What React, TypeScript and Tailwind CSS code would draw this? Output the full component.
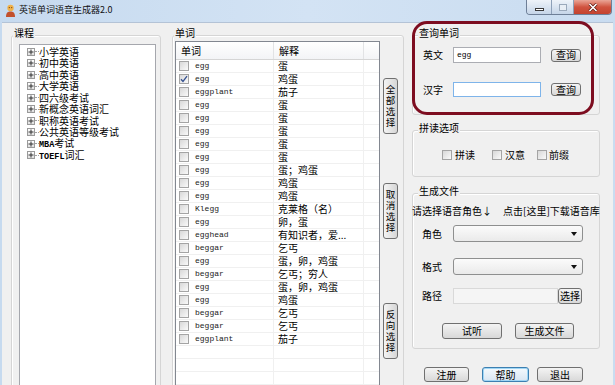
import React from 'react';

const FONT = "font-['Noto_Sans_CJK_SC','Noto_Sans',sans-serif]";
const MONO = "font-['Liberation_Mono','DejaVu_Sans_Mono',monospace]";

const courses = [
  '小学英语',
  '初中英语',
  '高中英语',
  '大学英语',
  '四六级考试',
  '新概念英语词汇',
  '职称英语考试',
  '公共英语等级考试',
  'MBA|考试',
  'TOEFL|词汇',
];

const words: [string, string][] = [
  ['egg', '蛋'],
  ['egg', '鸡蛋'],
  ['eggplant', '茄子'],
  ['egg', '蛋'],
  ['egg', '蛋'],
  ['egg', '蛋'],
  ['egg', '蛋'],
  ['egg', '蛋'],
  ['egg', '蛋；鸡蛋'],
  ['egg', '鸡蛋'],
  ['egg', '鸡蛋'],
  ['Klegg', '克莱格（名）'],
  ['egg', '卵，蛋'],
  ['egghead', '有知识者，爱...'],
  ['beggar', '乞丐'],
  ['egg', '蛋，卵，鸡蛋'],
  ['beggar', '乞丐；穷人'],
  ['egg', '蛋，卵，鸡蛋'],
  ['egg', '鸡蛋'],
  ['beggar', '乞丐'],
  ['beggar', '乞丐'],
  ['eggplant', '茄子'],
];

function Check({ checked = false }: { checked?: boolean }) {
  return (
    <span className="flex h-[10px] w-[10px] shrink-0 items-center justify-center border border-[#a4a4a4] bg-linear-to-br from-[#d8d8d8] to-[#fafafa]">
      {checked && (
        <svg width="8" height="8" viewBox="0 0 8 8">
          <path d="M1 4.2 L3 6.4 L7 1.2" fill="none" stroke="#34508f" strokeWidth="1.3" />
        </svg>
      )}
    </span>
  );
}

function Group({
  label,
  labelPos,
  className,
  children,
}: {
  label: string;
  labelPos: string;
  className: string;
  children?: React.ReactNode;
}) {
  return (
    <div className={`relative shrink-0 rounded-[3px] border border-[#d5d5d5] shadow-[inset_1px_1px_0_#fff] ${className}`}>
      <span className={`absolute -top-[9px] ${labelPos} bg-[#f0f0f0] px-[1px] text-[10px] leading-[12px]`}>{label}</span>
      {children}
    </div>
  );
}

function Btn({ children, className, primary = false }: { children: React.ReactNode; className: string; primary?: boolean }) {
  return (
    <div
      className={`flex shrink-0 items-center justify-center rounded-[3px] border text-[10px] leading-none ${
        primary
          ? 'border-[#3c7fb1] bg-linear-to-b from-[#f4f9fd] to-[#d9e6f2] shadow-[inset_0_0_0_1px_#9fd6f5]'
          : 'border-[#707070] bg-linear-to-b from-[#f4f4f4] to-[#d8d8d8]'
      } ${className}`}
    >
      {children}
    </div>
  );
}

// vertical caption button between the list and the right panel
function VBtn({ text, className }: { text: string; className: string }) {
  return (
    <div className={`flex h-[56px] w-[15px] flex-col items-center justify-center rounded-[3px] border border-[#707070] bg-linear-to-r from-[#f4f4f4] to-[#d6d6d6] text-[9.5px] ${className}`}>
      {text.split('').map((c, i) => (
        <span key={i} className="block h-[11px] leading-[11px]">
          {c}
        </span>
      ))}
    </div>
  );
}

function Combo() {
  return (
    <div className="flex h-[17px] w-[130px] items-center justify-end rounded-[3px] border border-[#8e8f8f] bg-linear-to-b from-[#fbfbfb] to-[#eaeaea] pr-[5px]">
      <svg width="6" height="4" viewBox="0 0 6 4">
        <path d="M0 0 H6 L3 4 Z" fill="#111" />
      </svg>
    </div>
  );
}

function TreeItem({ text }: { text: string }) {
  const [latin, cjk] = text.includes('|') ? text.split('|') : ['', text];
  return (
    <div className="flex h-[11.5px] items-center">
      <span className="flex h-[8px] w-[8px] shrink-0 items-center justify-center border border-[#9a9a9a] bg-linear-to-b from-white to-[#dedede]">
        <svg width="6" height="6" viewBox="0 0 6 6">
          <path d="M0.5 3 H5.5 M3 0.5 V5.5" stroke="#333" strokeWidth="1" />
        </svg>
      </span>
      <span className="w-[4px] border-t border-dotted border-[#a0a0a0]" />
      <span className="text-[10px] leading-none">
        {latin && <span className={`${MONO} text-[8.5px] font-bold`}>{latin}</span>}
        {cjk}
      </span>
    </div>
  );
}

export default function App() {
  return (
    <div className={`relative flex h-[385px] w-[615px] flex-col overflow-hidden bg-linear-to-r from-[#c6daef] via-[#d3e3f4] to-[#c9dcf0] text-black ${FONT}`}>
      {/* title bar */}
      <div className="flex h-[22px] shrink-0 items-start">
        <svg className="ml-[5px] mt-[4px]" width="11" height="13" viewBox="0 0 11 13">
          <circle cx="5.5" cy="4" r="3.2" fill="#f0b24a" />
          <path d="M1 13 C1 8.5 3 7.5 5.5 7.5 C8 7.5 10 8.5 10 13 Z" fill="#c2502c" />
          <circle cx="4.3" cy="3.6" r="0.6" fill="#6b3a10" />
          <circle cx="6.7" cy="3.6" r="0.6" fill="#6b3a10" />
        </svg>
        <span className="ml-[3px] mt-[5px] text-[9px] leading-none text-[#111]">英语单词语音生成器2.0</span>
        <div className="ml-auto mr-[3px] flex h-[15px] overflow-hidden rounded-b-[4px] border border-t-0 border-[#6e7f97]">
          <div className="flex w-[25px] items-center justify-center border-r border-[#8da0b8] bg-linear-to-b from-[#eef3f9] to-[#c5d5e8]">
            <span className="mt-[4px] h-[3px] w-[9px] border border-[#3a3a3a] bg-white" />
          </div>
          <div className="flex w-[22px] items-center justify-center border-r border-[#8da0b8] bg-linear-to-b from-[#eef3f9] to-[#c5d5e8]">
            <span className="h-[7px] w-[8px] border border-[#9aa9bb] bg-[#e8eef5]" />
          </div>
          <div className="flex w-[37px] items-center justify-center bg-linear-to-b from-[#e9a597] via-[#d0533f] to-[#c4432f]">
            <svg width="10" height="9" viewBox="0 0 10 9">
              <path d="M1.5 1 L8.5 8 M8.5 1 L1.5 8" stroke="#5a1a12" strokeWidth="3" />
              <path d="M1.5 1 L8.5 8 M8.5 1 L1.5 8" stroke="#fff" strokeWidth="1.6" />
            </svg>
          </div>
        </div>
      </div>

      {/* client area */}
      <div className="mx-[2px] flex flex-1 overflow-hidden border-t border-[#b4c3d6] bg-[#f0f0f0] pl-[9px] pt-[12px]">
        {/* 课程 */}
        <Group label="课程" labelPos="left-[1px]" className="h-[370px] w-[150px] pl-[7px] pr-[4px] pt-[8px]">
          <div className="h-[360px] border border-[#a5a7ad] bg-white pl-[7px] pt-[1px]">
            {courses.map((c) => (
              <TreeItem key={c} text={c} />
            ))}
          </div>
        </Group>

        {/* 单词 */}
        <Group label="单词" labelPos="left-[1px]" className="ml-[11px] flex h-[370px] w-[232px] pl-[2px] pt-[5px]">
          <div className="h-[360px] w-[205px] shrink-0 overflow-hidden border border-[#828790] bg-white">
            <div className="flex h-[18px] border-b border-[#d5d5d5] bg-linear-to-b from-white to-[#f3f4f6] text-[10px]">
              <div className="flex w-[98px] items-center border-r border-[#e2e3e5] pl-[5px]">单词</div>
              <div className="flex w-[90px] items-center border-r border-[#e2e3e5] pl-[5px]">解释</div>
              <div className="flex-1" />
            </div>
            {words.map(([w, m], i) => (
              <div key={i} className="flex h-[13px] border-b border-[#f0f0f0]">
                <div className="flex w-[98px] items-center border-r border-[#f0f0f0] pl-[3px]">
                  <Check checked={i === 1} />
                  <span className={`ml-[6px] text-[8px] leading-none text-[#222] ${MONO}`}>{w}</span>
                </div>
                <div className="flex w-[90px] items-center border-r border-[#f0f0f0] pl-[4px] text-[10px] leading-none whitespace-nowrap">
                  {m}
                </div>
                <div className="flex-1" />
              </div>
            ))}
            {[0, 1, 2, 3].map((i) => (
              <div key={`e${i}`} className="flex h-[13px] border-b border-[#f0f0f0]">
                <div className="w-[98px] border-r border-[#f0f0f0]" />
                <div className="w-[90px] border-r border-[#f0f0f0]" />
              </div>
            ))}
          </div>
          <div className="ml-[3px] flex flex-col pt-[37px]">
            <VBtn text="全部选择" className="" />
            <VBtn text="取消选择" className="mt-[49px]" />
            <VBtn text="反向选择" className="mt-[64px]" />
          </div>
        </Group>

        {/* right column */}
        <div className="ml-[8px] flex w-[188px] shrink-0 flex-col">
          <Group label="查询单词" labelPos="left-[5px]" className="h-[80px] pl-[10px] pt-[11px]">
            <div className="flex items-center">
              <span className="w-[30px] text-[10px] leading-none">英文</span>
              <div className={`flex h-[16px] w-[88px] items-center border border-[#abadb3] bg-white pl-[3px] text-[8px] ${MONO}`}>egg</div>
              <Btn className="ml-[10px] h-[13px] w-[30px]">查询</Btn>
            </div>
            <div className="mt-[19px] flex items-center">
              <span className="w-[30px] text-[10px] leading-none">汉字</span>
              <div className="h-[15px] w-[88px] border border-[#7eb4ea] bg-white" />
              <Btn className="ml-[10px] h-[13px] w-[30px]">查询</Btn>
            </div>
          </Group>

          <Group label="拼读选项" labelPos="left-[5px]" className="mt-[15px] h-[47px] pl-[29px] pt-[19px]">
            <div className="flex items-center text-[10px] leading-none">
              <div className="flex w-[50px] items-center">
                <Check />
                <span className="ml-[3px]">拼读</span>
              </div>
              <div className="flex w-[45px] items-center">
                <Check />
                <span className="ml-[3px]">汉意</span>
              </div>
              <div className="flex items-center">
                <Check />
                <span className="ml-[2px]">前缀</span>
              </div>
            </div>
          </Group>

          <Group label="生成文件" labelPos="left-[5px]" className="mt-[16px] h-[156px] pt-[11px]">
            <div className="-ml-[1px] flex h-[12px] items-center whitespace-nowrap text-[10px] leading-none">
              <span>请选择语音角色↓</span>
              <span className="ml-[11px]">点击[这里]下载语音库</span>
            </div>
            <div className="mt-[8px] flex items-center pl-[9px]">
              <span className="w-[31px] text-[10px] leading-none">角色</span>
              <Combo />
            </div>
            <div className="mt-[16px] flex items-center pl-[9px]">
              <span className="w-[31px] text-[10px] leading-none">格式</span>
              <Combo />
            </div>
            <div className="mt-[13px] flex items-center pl-[9px]">
              <span className="w-[31px] text-[10px] leading-none">路径</span>
              <div className="h-[16px] w-[105px] border border-[#d9d9d9] bg-[#f5f5f5]" />
              <Btn className="h-[16px] w-[24px]">选择</Btn>
            </div>
            <div className="mt-[19px] flex pl-[29px]">
              <Btn className="h-[16px] w-[60px]">试听</Btn>
              <Btn className="ml-[13px] h-[16px] w-[59px]">生成文件</Btn>
            </div>
          </Group>

          <div className="mt-[18px] flex">
            <Btn className="ml-[12px] h-[15px] w-[45px]">注册</Btn>
            <Btn primary className="ml-[13px] h-[15px] w-[47px]">帮助</Btn>
            <Btn className="ml-[8px] h-[15px] w-[46px]">退出</Btn>
          </div>
        </div>
      </div>

      {/* red annotation around 查询单词 */}
      <div className="pointer-events-none absolute left-[412px] top-[21px] h-[94px] w-[182px] rounded-[15px] border-[3px] border-[#7d0d20]" />
    </div>
  );
}
